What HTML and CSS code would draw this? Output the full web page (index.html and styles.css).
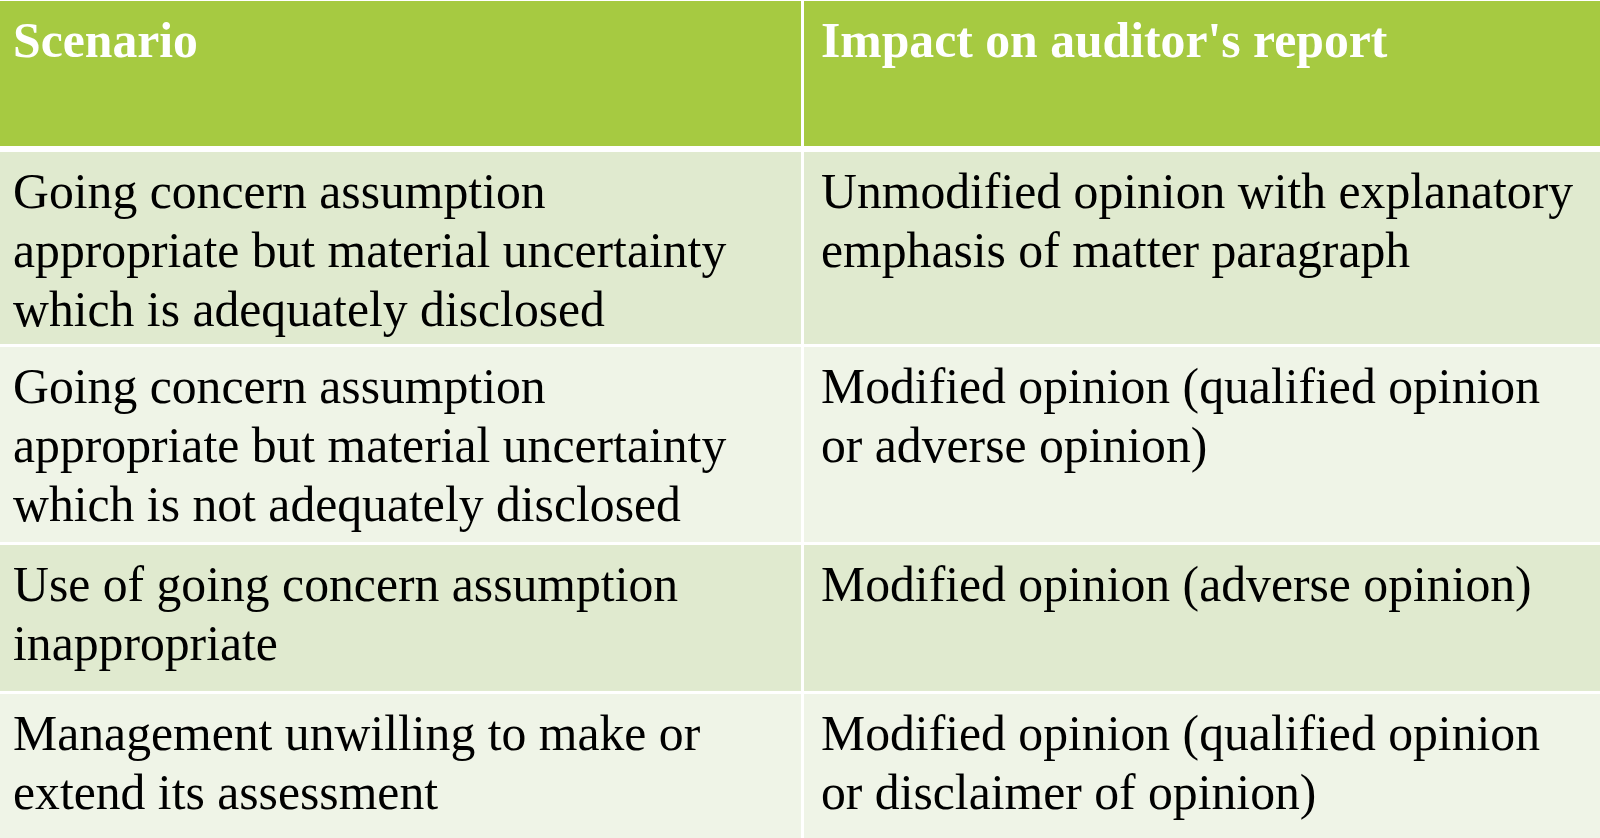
FILE: index.html
```html
<!DOCTYPE html>
<html lang="en">
<head>
<meta charset="utf-8">
<title>Going concern scenarios</title>
<link rel="stylesheet" href="styles.css">
</head>
<body>
<div class="table">
  <div class="cell head left">Scenario</div>
  <div class="cell head right">Impact on auditor's report</div>

  <div class="cell odd first left">Going concern assumption appropriate but material uncertainty which is adequately disclosed</div>
  <div class="cell odd first right">Unmodified opinion with explanatory emphasis of matter paragraph</div>

  <div class="cell even left">Going concern assumption appropriate but material uncertainty which is not adequately disclosed</div>
  <div class="cell even right">Modified opinion (qualified opinion or adverse opinion)</div>

  <div class="cell odd left">Use of going concern assumption inappropriate</div>
  <div class="cell odd right">Modified opinion (adverse opinion)</div>

  <div class="cell even left">Management unwilling to make or extend its assessment</div>
  <div class="cell even right">Modified opinion (qualified opinion or disclaimer of opinion)</div>
</div>
</body>
</html>
```

FILE: styles.css
```css
html, body {
  margin: 0;
  padding: 0;
  background: #ffffff;
  overflow: hidden;
}

.table {
  width: 1600px;
  height: 838px;
  box-sizing: border-box;
  padding-top: 1px;
  display: grid;
  grid-template-columns: 801px 796px;
  grid-template-rows: 145px 195px 195px 146px 144px;
  column-gap: 3px;
  row-gap: 3px;
  background: #ffffff;
  font-family: "Liberation Serif", "Times New Roman", serif;
}

.cell {
  box-sizing: border-box;
  padding-top: 10px;
  font-size: 49.7px;
  line-height: 59px;
  color: #000000;
}

.left {
  padding-left: 13px;
  padding-right: 50px;
}

.right {
  padding-left: 17px;
  padding-right: 12px;
}

.head {
  background: #a6ca41;
  color: #ffffff;
  font-weight: bold;
}

.odd {
  background: #e0eacf;
}

.even {
  background: #eff4e7;
}

.first {
  margin-top: 3px;
}
```
